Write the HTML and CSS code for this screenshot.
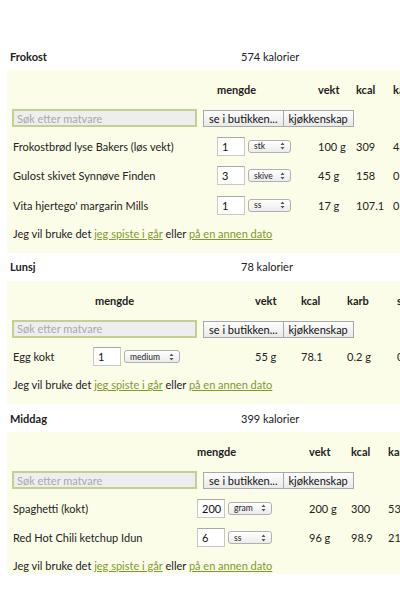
FILE: index.html
```html
<!DOCTYPE html>
<html lang="no">
<head>
<meta charset="utf-8">
<title>Måltider</title>
<link rel="stylesheet" href="styles.css">
</head>
<body>
<div class="page">

  <section class="meal">
    <div class="meal-head"><span class="meal-title">Frokost</span><span class="meal-kcal">574 kalorier</span></div>
    <div class="panel">
      <div class="grid g-frokost">
        <div class="hdr"></div><div class="hdr">mengde</div><div class="hdr">vekt</div><div class="hdr">kcal</div><div class="hdr">karb</div><div class="hdr">fett</div>
        <div class="search-row">
          <input class="search" type="text" placeholder="Søk etter matvare">
          <div class="btns"><button class="btn">se i butikken...</button><button class="btn">kjøkkenskap</button></div>
        </div>
        <div class="cell name">Frokostbrød lyse Bakers (løs vekt)</div>
        <div class="cell qty"><input class="num" type="text" value="1"><span class="sel w43">stk<svg class="arr" viewBox="0 0 5 8" width="5" height="8"><path d="M0.5 3 L2.5 0.6 L4.5 3 Z M0.5 5 L2.5 7.4 L4.5 5 Z"/></svg></span></div>
        <div class="cell">100 g</div><div class="cell">309</div><div class="cell">48 g</div><div class="cell">6 g</div>
        <div class="cell name">Gulost skivet Synnøve Finden</div>
        <div class="cell qty"><input class="num" type="text" value="3"><span class="sel w43">skive<svg class="arr" viewBox="0 0 5 8" width="5" height="8"><path d="M0.5 3 L2.5 0.6 L4.5 3 Z M0.5 5 L2.5 7.4 L4.5 5 Z"/></svg></span></div>
        <div class="cell">45 g</div><div class="cell">158</div><div class="cell">0 g</div><div class="cell">12 g</div>
        <div class="cell name">Vita hjertego' margarin Mills</div>
        <div class="cell qty"><input class="num" type="text" value="1"><span class="sel w43">ss<svg class="arr" viewBox="0 0 5 8" width="5" height="8"><path d="M0.5 3 L2.5 0.6 L4.5 3 Z M0.5 5 L2.5 7.4 L4.5 5 Z"/></svg></span></div>
        <div class="cell">17 g</div><div class="cell">107.1</div><div class="cell">0.1 g</div><div class="cell">11.9 g</div>
      </div>
      <div class="link-row">Jeg vil bruke det <a href="#">jeg spiste i går</a> eller <a href="#">på en annen dato</a></div>
    </div>
  </section>

  <section class="meal">
    <div class="meal-head"><span class="meal-title">Lunsj</span><span class="meal-kcal">78 kalorier</span></div>
    <div class="panel">
      <div class="grid g-lunsj">
        <div class="hdr"></div><div class="hdr hdr-m">mengde</div><div class="hdr">vekt</div><div class="hdr">kcal</div><div class="hdr">karb</div><div class="hdr">sukker</div>
        <div class="search-row">
          <input class="search" type="text" placeholder="Søk etter matvare">
          <div class="btns"><button class="btn">se i butikken...</button><button class="btn">kjøkkenskap</button></div>
        </div>
        <div class="cell name">Egg kokt</div>
        <div class="cell qty"><input class="num" type="text" value="1"><span class="sel w56">medium<svg class="arr" viewBox="0 0 5 8" width="5" height="8"><path d="M0.5 3 L2.5 0.6 L4.5 3 Z M0.5 5 L2.5 7.4 L4.5 5 Z"/></svg></span></div>
        <div class="cell">55 g</div><div class="cell">78.1</div><div class="cell">0.2 g</div><div class="cell">0 g</div>
      </div>
      <div class="link-row">Jeg vil bruke det <a href="#">jeg spiste i går</a> eller <a href="#">på en annen dato</a></div>
    </div>
  </section>

  <section class="meal">
    <div class="meal-head"><span class="meal-title">Middag</span><span class="meal-kcal">399 kalorier</span></div>
    <div class="panel">
      <div class="grid g-middag">
        <div class="hdr"></div><div class="hdr">mengde</div><div class="hdr">vekt</div><div class="hdr">kcal</div><div class="hdr">karb</div><div class="hdr">fett</div>
        <div class="search-row">
          <input class="search" type="text" placeholder="Søk etter matvare">
          <div class="btns"><button class="btn">se i butikken...</button><button class="btn">kjøkkenskap</button></div>
        </div>
        <div class="cell name">Spaghetti (kokt)</div>
        <div class="cell qty"><input class="num" type="text" value="200"><span class="sel w44">gram<svg class="arr" viewBox="0 0 5 8" width="5" height="8"><path d="M0.5 3 L2.5 0.6 L4.5 3 Z M0.5 5 L2.5 7.4 L4.5 5 Z"/></svg></span></div>
        <div class="cell">200 g</div><div class="cell">300</div><div class="cell">53 g</div><div class="cell">1.8 g</div>
        <div class="cell name">Red Hot Chili ketchup Idun</div>
        <div class="cell qty"><input class="num" type="text" value="6"><span class="sel w44">ss<svg class="arr" viewBox="0 0 5 8" width="5" height="8"><path d="M0.5 3 L2.5 0.6 L4.5 3 Z M0.5 5 L2.5 7.4 L4.5 5 Z"/></svg></span></div>
        <div class="cell">96 g</div><div class="cell">98.9</div><div class="cell">21.1 g</div><div class="cell">0.2 g</div>
      </div>
      <div class="link-row">Jeg vil bruke det <a href="#">jeg spiste i går</a> eller <a href="#">på en annen dato</a></div>
    </div>
  </section>

</div>
</body>
</html>
```

FILE: styles.css
```css
html, body {
  margin: 0;
  padding: 0;
  overflow: hidden;
  background: #ffffff;
}
body {
  font-family: "Lato", "Open Sans", sans-serif;
  font-size: 11px;
  color: #222222;
}
.page {
  padding-top: 42px;
  width: 560px;
}
.meal-head {
  display: flex;
  align-items: center;
  height: 28px;
  padding-left: 10px;
}
.meal-title {
  width: 231px;
  font-weight: 700;
}
.meal-kcal {
  font-weight: 400;
}
.panel {
  margin-left: 7px;
  padding: 0 0 6px 5px;
  background: #fbfde8;
}
.grid {
  display: grid;
  grid-auto-rows: 29.5px;
  grid-template-rows: 39px 22.5px;
}
.g-frokost { grid-template-columns: 205px 101px 38px 37px 50px 60px; }
.g-lunsj   { grid-template-columns: 81px 162px 46px 46px 50px 60px; }
.g-middag  { grid-template-columns: 185px 112px 42px 37px 50px 60px; }

.hdr {
  font-weight: 700;
  display: flex;
  align-items: center;
  white-space: nowrap;
}
.hdr-m { padding-left: 2px; }

.search-row {
  grid-column: 1 / -1;
  display: flex;
  align-items: flex-start;
  gap: 6px;
}
.search {
  box-sizing: border-box;
  width: 185px;
  height: 18px;
  margin: 0;
  padding: 0 0 0 3px;
  border: 2px solid #c2d092;
  background: #eeeeee;
  font-family: inherit;
  font-size: 11px;
  color: #222;
  outline: none;
}
.search::placeholder { color: #a9a9a9; }
.btns {
  display: flex;
  padding-top: 1px;
}
.btn {
  box-sizing: border-box;
  height: 17px;
  margin: 0;
  padding: 0 5px;
  border: 1px solid #a8a8a8;
  background: linear-gradient(#fdfdfd, #e9e9e9);
  font-family: inherit;
  font-size: 11px;
  color: #111;
  line-height: 15px;
}
.btn + .btn { border-left: none; }

.cell {
  display: flex;
  align-items: center;
  white-space: nowrap;
}
.name { padding-left: 1px; }
.qty { gap: 3px; }
.num {
  box-sizing: border-box;
  width: 28px;
  height: 19px;
  margin: 0;
  padding: 0 0 0 4px;
  border: 1px solid #c8c8c8;
  border-top-color: #a9a9a9;
  background: #ffffff;
  font-family: inherit;
  font-size: 11px;
  color: #111;
  outline: none;
}
.sel {
  box-sizing: border-box;
  display: inline-flex;
  align-items: center;
  justify-content: space-between;
  height: 13px;
  padding: 0 5px 0 5px;
  border: 1px solid #b0b0b0;
  border-radius: 3px;
  background: linear-gradient(#ffffff, #ececec);
  font-size: 8.5px;
  color: #222;
}
.w43 { width: 43px; }
.w44 { width: 44px; }
.w56 { width: 56px; }
.arr { fill: #555; }

.link-row {
  height: 26.5px;
  display: flex;
  align-items: center;
  padding-left: 1px;
  white-space: pre;
}
.link-row a {
  color: #7d9a2c;
  text-decoration: underline;
}
.meal:last-child .panel { padding-bottom: 0; }
.meal:last-child .link-row {
  height: 21px;
  align-items: flex-start;
  padding-top: 6px;
  box-sizing: border-box;
  height: 21.5px;
}
```
